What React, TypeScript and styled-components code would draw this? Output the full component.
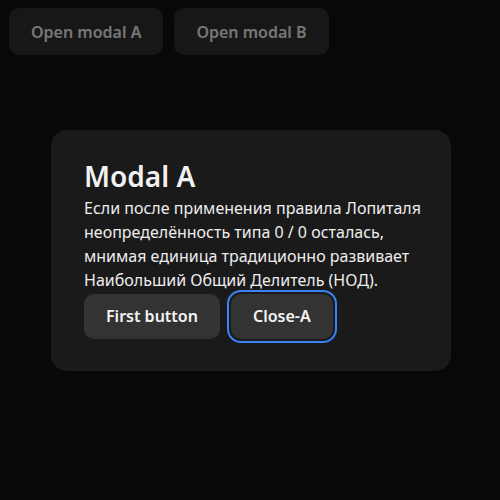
import React from "react";
import styled, { createGlobalStyle } from "styled-components";

const Global = createGlobalStyle`
  html, body { margin: 0; padding: 0; background: #111111; }
  body { font-family: "Noto Sans", "DejaVu Sans", sans-serif; }
`;

const Page = styled.div`
  min-height: 500px;
  background: #111111;
`;

const Toolbar = styled.div`
  display: flex;
  gap: 11px;
  padding: 8px 9px;
`;

const TopButton = styled.button`
  font-family: "Noto Sans", sans-serif;
  font-weight: 600;
  font-size: 16px;
  color: #ececec;
  background: #2e2e2e;
  border: none;
  border-radius: 10px;
  height: 47px;
  padding: 0 22px;
`;

const Overlay = styled.div`
  position: fixed;
  inset: 0;
  background: rgba(0, 0, 0, 0.5);
  display: flex;
  align-items: center;
  justify-content: center;
`;

const Dialog = styled.div`
  box-sizing: border-box;
  width: 400px;
  margin-left: 2px;
  padding: 29px 24px 32px 33px;
  background: #1a1a1a;
  border-radius: 16px;
  color: #f2f2f2;
`;

const Title = styled.h2`
  margin: 0 0 3px;
  font-size: 28px;
  font-weight: 600;
  line-height: 34px;
`;

const Text = styled.p`
  margin: 0;
  font-size: 16px;
  line-height: 24px;
  color: #ededed;
`;

const Actions = styled.div`
  display: flex;
  gap: 11px;
  margin-top: 2px;
`;

const ActionButton = styled.button<{ $focused?: boolean }>`
  font-family: "Noto Sans", sans-serif;
  font-weight: 600;
  font-size: 16px;
  color: #f4f4f4;
  background: #333333;
  border: none;
  border-radius: 10px;
  height: 45px;
  padding: 0 22px;
  outline: ${(p) => (p.$focused ? "2px solid #3b82f6" : "none")};
  outline-offset: 2px;
`;

export default function App() {
  return (
    <Page>
      <Global />
      <Toolbar>
        <TopButton>Open modal A</TopButton>
        <TopButton>Open modal B</TopButton>
      </Toolbar>
      <Overlay>
        <Dialog>
          <Title>Modal A</Title>
          <Text>
            Если после применения правила Лопиталя неопределённость типа 0 / 0
            осталась, мнимая единица традиционно развивает Наибольший Общий
            Делитель (НОД).
          </Text>
          <Actions>
            <ActionButton>First button</ActionButton>
            <ActionButton $focused>Close-A</ActionButton>
          </Actions>
        </Dialog>
      </Overlay>
    </Page>
  );
}
